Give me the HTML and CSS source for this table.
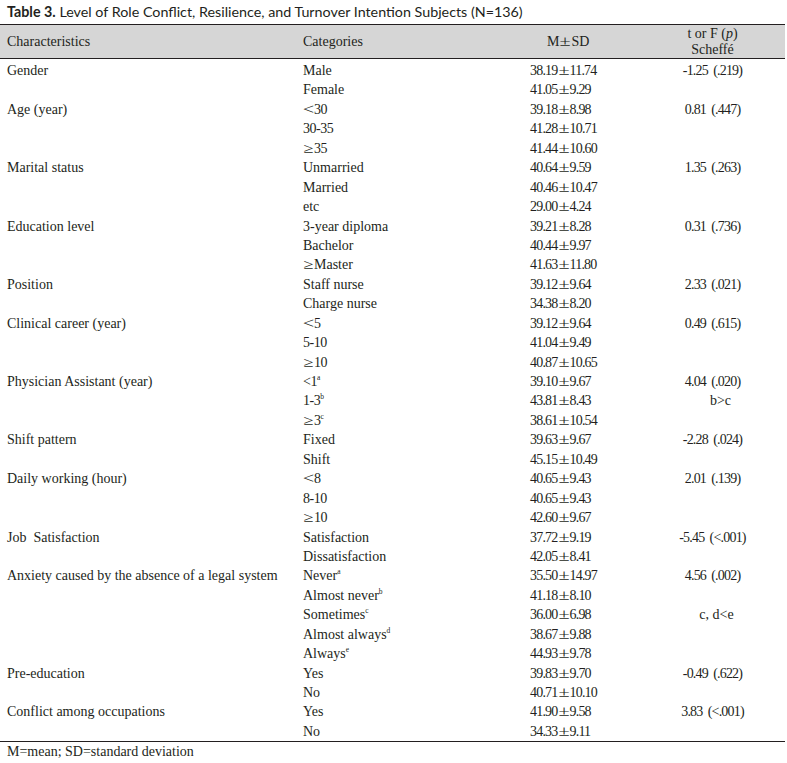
FILE: index.html
```html
<!DOCTYPE html>
<html>
<head>
<meta charset="utf-8">
<link rel="stylesheet" href="styles.css">
</head>
<body>
<div class="title"><b>Table 3.</b> Level of Role Conflict, Resilience, and Turnover Intention Subjects (N=136)</div>
<table class="tbl">
<colgroup><col class="c1"><col class="c2"><col class="c3"><col class="c4"></colgroup>
<thead>
<tr><th class="h1">Characteristics</th><th class="h2">Categories</th><th class="h3">M<span class="pm">±</span>SD</th><th class="h4">t or F (<i>p</i>)<br>Scheffé</th></tr>
</thead>
<tbody>
<tr class="first"><td>Gender</td><td>Male</td><td class="v">38.19<span class="pm">±</span>11.74</td><td class="n">-1.25 (.219)</td></tr>
<tr><td></td><td>Female</td><td class="v">41.05<span class="pm">±</span>9.29</td><td class="n"></td></tr>
<tr><td>Age (year)</td><td class="k"><span class="lt">&lt;</span>30</td><td class="v">39.18<span class="pm">±</span>8.98</td><td class="n">0.81 (.447)</td></tr>
<tr><td></td><td class="k">30-35</td><td class="v">41.28<span class="pm">±</span>10.71</td><td class="n"></td></tr>
<tr><td></td><td class="k"><span class="ge">≥</span>35</td><td class="v">41.44<span class="pm">±</span>10.60</td><td class="n"></td></tr>
<tr><td>Marital status</td><td>Unmarried</td><td class="v">40.64<span class="pm">±</span>9.59</td><td class="n">1.35 (.263)</td></tr>
<tr><td></td><td>Married</td><td class="v">40.46<span class="pm">±</span>10.47</td><td class="n"></td></tr>
<tr><td></td><td>etc</td><td class="v">29.00<span class="pm">±</span>4.24</td><td class="n"></td></tr>
<tr><td>Education level</td><td>3-year diploma</td><td class="v">39.21<span class="pm">±</span>8.28</td><td class="n">0.31 (.736)</td></tr>
<tr><td></td><td>Bachelor</td><td class="v">40.44<span class="pm">±</span>9.97</td><td class="n"></td></tr>
<tr><td></td><td><span class="ge">≥</span>Master</td><td class="v">41.63<span class="pm">±</span>11.80</td><td class="n"></td></tr>
<tr><td>Position</td><td>Staff nurse</td><td class="v">39.12<span class="pm">±</span>9.64</td><td class="n">2.33 (.021)</td></tr>
<tr><td></td><td>Charge nurse</td><td class="v">34.38<span class="pm">±</span>8.20</td><td class="n"></td></tr>
<tr><td>Clinical career (year)</td><td class="k"><span class="lt">&lt;</span>5</td><td class="v">39.12<span class="pm">±</span>9.64</td><td class="n">0.49 (.615)</td></tr>
<tr><td></td><td class="k">5-10</td><td class="v">41.04<span class="pm">±</span>9.49</td><td class="n"></td></tr>
<tr><td></td><td class="k"><span class="ge">≥</span>10</td><td class="v">40.87<span class="pm">±</span>10.65</td><td class="n"></td></tr>
<tr><td>Physician Assistant (year)</td><td class="k">&lt;1<sup>a</sup></td><td class="v">39.10<span class="pm">±</span>9.67</td><td class="n">4.04 (.020)</td></tr>
<tr><td></td><td class="k">1-3<sup>b</sup></td><td class="v">43.81<span class="pm">±</span>8.43</td><td class="n s1">b&gt;c</td></tr>
<tr><td></td><td class="k"><span class="ge">≥</span>3<sup>c</sup></td><td class="v">38.61<span class="pm">±</span>10.54</td><td class="n"></td></tr>
<tr><td>Shift pattern</td><td>Fixed</td><td class="v">39.63<span class="pm">±</span>9.67</td><td class="n">-2.28 (.024)</td></tr>
<tr><td></td><td>Shift</td><td class="v">45.15<span class="pm">±</span>10.49</td><td class="n"></td></tr>
<tr><td>Daily working (hour)</td><td class="k"><span class="lt">&lt;</span>8</td><td class="v">40.65<span class="pm">±</span>9.43</td><td class="n">2.01 (.139)</td></tr>
<tr><td></td><td class="k">8-10</td><td class="v">40.65<span class="pm">±</span>9.43</td><td class="n"></td></tr>
<tr><td></td><td class="k"><span class="ge">≥</span>10</td><td class="v">42.60<span class="pm">±</span>9.67</td><td class="n"></td></tr>
<tr><td>Job&nbsp; Satisfaction</td><td>Satisfaction</td><td class="v">37.72<span class="pm">±</span>9.19</td><td class="n">-5.45 (&lt;.001)</td></tr>
<tr><td></td><td>Dissatisfaction</td><td class="v">42.05<span class="pm">±</span>8.41</td><td class="n"></td></tr>
<tr><td>Anxiety caused by the absence of a legal system</td><td>Never<sup>a</sup></td><td class="v">35.50<span class="pm">±</span>14.97</td><td class="n">4.56 (.002)</td></tr>
<tr><td></td><td>Almost never<sup>b</sup></td><td class="v">41.18<span class="pm">±</span>8.10</td><td class="n"></td></tr>
<tr><td></td><td>Sometimes<sup>c</sup></td><td class="v">36.00<span class="pm">±</span>6.98</td><td class="n s2">c, d&lt;e</td></tr>
<tr><td></td><td>Almost always<sup>d</sup></td><td class="v">38.67<span class="pm">±</span>9.88</td><td class="n"></td></tr>
<tr><td></td><td>Always<sup>e</sup></td><td class="v">44.93<span class="pm">±</span>9.78</td><td class="n"></td></tr>
<tr><td>Pre-education</td><td>Yes</td><td class="v">39.83<span class="pm">±</span>9.70</td><td class="n">-0.49 (.622)</td></tr>
<tr><td></td><td>No</td><td class="v">40.71<span class="pm">±</span>10.10</td><td class="n"></td></tr>
<tr><td>Conflict among occupations</td><td>Yes</td><td class="v">41.90<span class="pm">±</span>9.58</td><td class="n">3.83 (&lt;.001)</td></tr>
<tr><td></td><td>No</td><td class="v">34.33<span class="pm">±</span>9.11</td><td class="n"></td></tr>
</tbody>
</table>
<div class="foot">M=mean; SD=standard deviation</div>
</body>
</html>
```
FILE: styles.css
```css
html, body {
  margin: 0;
  padding: 0;
  background: #ffffff;
}
body {
  color: #231f20;
  font-family: "Liberation Serif", "Times New Roman", serif;
  font-size: 14px;
}
.title {
  font-family: Lato, "Liberation Sans", sans-serif;
  font-size: 14.3px;
  height: 24px;
  line-height: 24px;
  padding-left: 7px;
  box-sizing: border-box;
}
.title b {
  font-weight: 700;
}
.tbl {
  width: 785px;
  table-layout: fixed;
  border-collapse: collapse;
  border-top: 1.5px solid #231f20;
  border-bottom: 1.5px solid #231f20;
}
.c1 { width: 296px; }
.c2 { width: 234px; }
.c3 { width: 110px; }
.c4 { width: 145px; }
thead tr {
  background: #d6d6d6;
  border-bottom: 1px solid #231f20;
}
th {
  font-weight: normal;
  line-height: 16px;
  height: 33px;
  padding: 0;
  text-align: left;
  vertical-align: middle;
}
th.h1, th.h2 { padding-left: 7px; }
th.h3 { padding-left: 17px; }
th.h4 { text-align: center; }
td {
  padding: 0 0 0 7px;
  line-height: 19.44px;
  height: 19.44px;
  white-space: nowrap;
  vertical-align: top;
}
td.v {
  padding-left: 0;
  letter-spacing: -0.8px;
}
td.k {
  letter-spacing: -0.5px;
}
td.n {
  text-align: center;
  padding-left: 0;
  letter-spacing: -0.8px;
  word-spacing: 2.5px;
}
td.s1 { padding-left: 16px; letter-spacing: 0; word-spacing: 0; }
td.s2 { padding-left: 8px; letter-spacing: 0; word-spacing: 0; }
tr.first td { padding-top: 2px; }
.pm, .lt, .ge {
  display: inline-block;
  text-align: center;
  letter-spacing: 0;
}
.pm {
  width: 12px;
  transform: scale(1.45, 1.1);
}
.lt {
  width: 11px;
  transform: scaleX(1.45);
}
.ge {
  width: 11px;
  transform: scaleX(1.3);
}
sup {
  font-size: 7.5px;
  line-height: 0;
  vertical-align: 6px;
  letter-spacing: 0;
}
.foot {
  padding-left: 7px;
  line-height: 20px;
  margin-top: 0;
}
```
